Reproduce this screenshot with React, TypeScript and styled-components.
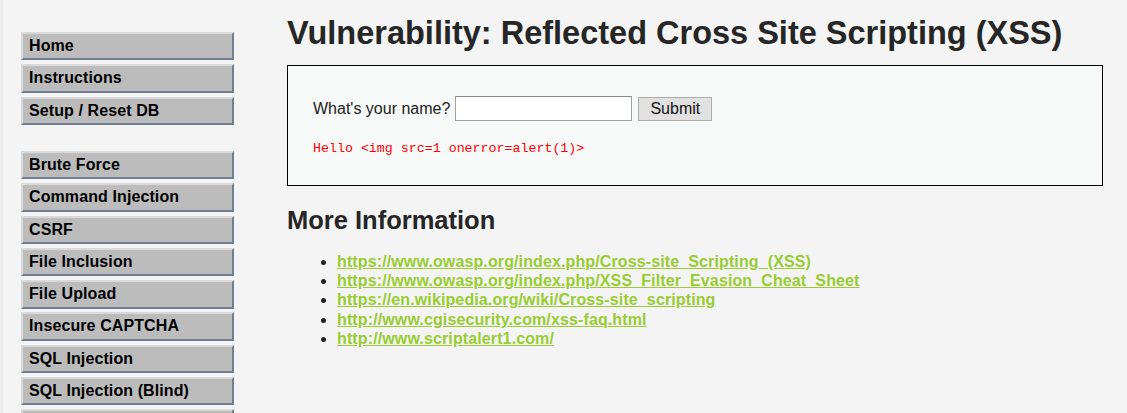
import React from "react";
import styled, { createGlobalStyle } from "styled-components";

const Global = createGlobalStyle`
  html, body { margin: 0; padding: 0; background: #f4f4f4; }
  body { font-family: "Liberation Sans", Arial, sans-serif; color: #222; }
`;

const Page = styled.div`
  display: flex;
  align-items: flex-start;
  min-height: 413px;
  border-left: 3px solid #ebebeb;
  box-sizing: border-box;
`;

const Sidebar = styled.nav`
  width: 213px;
  margin: 32px 0 0 18px;
  flex-shrink: 0;
`;

const MenuGroup = styled.ul<{ $gap?: number }>`
  list-style: none;
  margin: 0 0 ${(p) => p.$gap ?? 0}px 0;
  padding: 0;
`;

const MenuItem = styled.li`
  display: block;
  margin: 0 0 3.9px 0;
  padding: 3px 6px;
  background: #bcbcbc;
  border-top: 2px solid #d9d9d9;
  border-left: 2px solid #d9d9d9;
  border-right: 2px solid #727d90;
  border-bottom: 2px solid #727d90;
  font-size: 16px;
  font-weight: bold;
  color: #000;
  line-height: 18.4px;
  white-space: nowrap;
  letter-spacing: 0.1px;
`;

const Main = styled.main`
  margin-left: 53px;
  flex: 1;
  padding-top: 14px;
  padding-right: 24px;
`;

const Title = styled.h1`
  margin: 0 0 13px 0;
  font-size: 32.5px;
  font-weight: bold;
  color: #262626;
  line-height: 38px;
  white-space: nowrap;
`;

const Box = styled.div`
  border: 1px solid #000;
  background: #f7f8f8;
  padding: 30px 25px 25px 25px;
  height: 121px;
  box-sizing: border-box;
  width: 816px;
`;

const Form = styled.form`
  display: flex;
  align-items: center;
  font-size: 16px;
  color: #222;
`;

const Label = styled.span`
  margin-right: 5px;
  margin-top: 1px;
`;

const Input = styled.input`
  width: 177px;
  height: 25px;
  box-sizing: border-box;
  border: 1px solid #a0a0a0;
  border-top-color: #8a8a8a;
  background: #fff;
  margin: 0 6px 0 0;
  padding: 0;
`;

const Button = styled.button`
  height: 24px;
  width: 74px;
  box-sizing: border-box;
  background: #e1e1e1;
  border: 1px solid #adadad;
  font-family: "Liberation Sans", Arial, sans-serif;
  font-size: 16px;
  color: #111;
  padding: 0;
`;

const Reply = styled.pre`
  margin: 20px 0 0 0;
  font-family: "Liberation Mono", "Courier New", monospace;
  font-size: 13.3px;
  color: #ff0000;
`;

const SubTitle = styled.h2`
  margin: 19px 0 0 0;
  font-size: 25.5px;
  font-weight: bold;
  color: #262626;
  line-height: 30px;
`;

const Links = styled.ul`
  margin: 17px 0 0 0;
  padding-left: 50px;
  font-size: 16px;
  line-height: 19.2px;
  li::marker { color: #222; }
`;

const LinkItem = styled.li``;

const Link = styled.a`
  color: #99cc33;
  font-weight: bold;
  text-decoration: underline;
  letter-spacing: 0.12px;
`;

const topMenu = ["Home", "Instructions", "Setup / Reset DB"];
const vulnMenu = [
  "Brute Force",
  "Command Injection",
  "CSRF",
  "File Inclusion",
  "File Upload",
  "Insecure CAPTCHA",
  "SQL Injection",
  "SQL Injection (Blind)",
  "Weak Session IDs",
];

const links = [
  "https://www.owasp.org/index.php/Cross-site_Scripting_(XSS)",
  "https://www.owasp.org/index.php/XSS_Filter_Evasion_Cheat_Sheet",
  "https://en.wikipedia.org/wiki/Cross-site_scripting",
  "http://www.cgisecurity.com/xss-faq.html",
  "http://www.scriptalert1.com/",
];

export default function App() {
  return (
    <>
      <Global />
      <Page>
        <Sidebar>
          <MenuGroup $gap={26}>
            {topMenu.map((m) => (
              <MenuItem key={m}>{m}</MenuItem>
            ))}
          </MenuGroup>
          <MenuGroup>
            {vulnMenu.map((m) => (
              <MenuItem key={m}>{m}</MenuItem>
            ))}
          </MenuGroup>
        </Sidebar>
        <Main>
          <Title>Vulnerability: Reflected Cross Site Scripting (XSS)</Title>
          <Box>
            <Form onSubmit={(e) => e.preventDefault()}>
              <Label>What's your name?</Label>
              <Input type="text" />
              <Button type="submit">Submit</Button>
            </Form>
            <Reply>{"Hello <img src=1 onerror=alert(1)>"}</Reply>
          </Box>
          <SubTitle>More Information</SubTitle>
          <Links>
            {links.map((l) => (
              <LinkItem key={l}>
                <Link href="#">{l}</Link>
              </LinkItem>
            ))}
          </Links>
        </Main>
      </Page>
    </>
  );
}
